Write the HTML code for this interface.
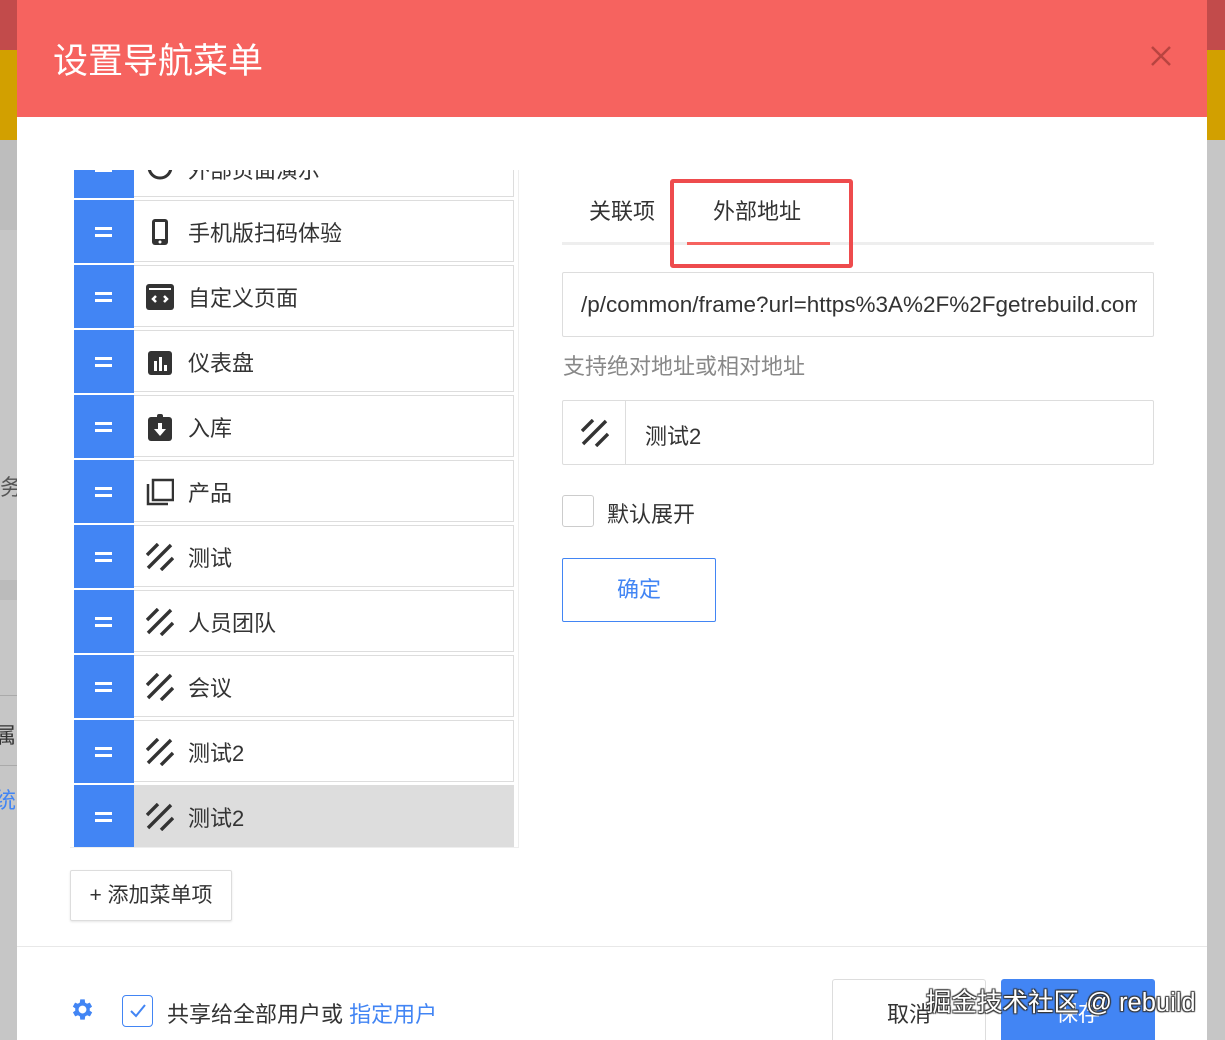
<!DOCTYPE html>
<html><head><meta charset="utf-8"><style>
*{box-sizing:border-box;margin:0;padding:0}
html,body{width:1225px;height:1040px;overflow:hidden}
body{background:#c6c6c6;font-family:"Liberation Sans","Noto Sans CJK SC",sans-serif;color:#333;position:relative}
.abs{position:absolute}
.modal{left:17px;top:0;width:1190px;height:1040px;background:#fff}
.hdr{left:17px;top:0;width:1190px;height:117px;background:#f6635f}
.title{left:53px;top:33px;font-size:35px;color:#fff}
.list{left:70px;top:170px;width:449px;height:678px;overflow:hidden;border-right:1px solid #eee;border-bottom:1px solid #eee}
.row{position:absolute;left:4px;width:440px;height:62px;border:1px solid #ddd;border-left:none;background:#fff}
.row .h{position:absolute;left:0;top:-1px;width:60px;height:63px;background:#4285f4}
.row .h:before,.row .h:after{content:"";position:absolute;left:21px;width:17px;height:3px;background:#fff}
.row .h:before{top:27px}.row .h:after{top:34px}
.row .ic{position:absolute;left:72px;top:17px;width:28px;height:28px}
.row .t{position:absolute;left:114px;top:15px;font-size:22px;color:#333}
.tab{font-size:22px;top:194px}
</style></head><body>
<div class="abs" style="left:0;top:0;width:17px;height:50px;background:#c24b4b"></div>
<div class="abs" style="left:0;top:50px;width:17px;height:90px;background:#d2a000"></div>
<div class="abs" style="left:0;top:140px;width:17px;height:90px;background:#bdbdbd"></div>
<div class="abs" style="left:0;top:580px;width:17px;height:20px;background:#bbb"></div>
<div class="abs" style="left:0;top:695px;width:17px;height:1px;background:#aaa"></div>
<div class="abs" style="left:0;top:765px;width:17px;height:1px;background:#aaa"></div>
<div class="abs" style="left:1207px;top:0;width:18px;height:50px;background:#c24b4b"></div>
<div class="abs" style="left:1207px;top:50px;width:18px;height:90px;background:#d2a000"></div>
<div class="abs" style="left:0;top:470px;font-size:22px;color:#555">务</div>
<div class="abs" style="left:-6px;top:718px;font-size:22px;color:#333">属</div>
<div class="abs" style="left:-6px;top:783px;font-size:22px;color:#4285f4">统</div>

<div class="abs modal"></div>
<div class="abs hdr"></div>
<div class="abs title">设置导航菜单</div>
<svg class="abs" style="left:1150px;top:45px" width="22" height="22"><path d="M2 2L20 20M20 2L2 20" stroke="#b84440" stroke-width="2.5"/></svg>

<div class="abs list">
 <div class="row" style="top:-35px"><div class="h"></div><div class="t" style="top:17px">外部页面演示</div>
  <svg class="ic" viewBox="0 0 28 28"><circle cx="14" cy="14" r="11" fill="none" stroke="#333" stroke-width="3"/></svg></div>
 <div class="row" style="top:30px"><div class="h"></div>
  <svg class="ic" viewBox="0 0 28 28"><rect x="6" y="1" width="16" height="26" rx="3" fill="#333"/><rect x="9" y="4" width="10" height="17" fill="#fff"/><circle cx="14" cy="24" r="1.5" fill="#fff"/></svg><div class="t">手机版扫码体验</div></div>
 <div class="row" style="top:95px"><div class="h"></div>
  <svg class="ic" viewBox="0 0 28 28"><rect x="0" y="1" width="28" height="26" rx="3" fill="#333"/><rect x="3" y="5" width="22" height="2" fill="#fff"/><path d="M10 13l-3 3 3 3M18 13l3 3-3 3" stroke="#fff" stroke-width="2.5" fill="none"/></svg><div class="t">自定义页面</div></div>
 <div class="row" style="top:160px"><div class="h"></div>
  <svg class="ic" viewBox="0 0 28 28"><rect x="2" y="3" width="24" height="24" rx="3" fill="#333"/><rect x="8" y="13" width="3" height="10" fill="#fff"/><rect x="13" y="9" width="3" height="14" fill="#fff"/><rect x="18" y="17" width="3" height="6" fill="#fff"/></svg><div class="t">仪表盘</div></div>
 <div class="row" style="top:225px"><div class="h"></div>
  <svg class="ic" viewBox="0 0 28 28"><rect x="2" y="4" width="24" height="24" rx="3" fill="#333"/><rect x="11" y="1" width="6" height="5" rx="2" fill="#333"/><path d="M12 10h4v6h4l-6 7-6-7h4z" fill="#fff"/></svg><div class="t">入库</div></div>
 <div class="row" style="top:290px"><div class="h"></div>
  <svg class="ic" viewBox="0 0 28 28"><path d="M2 6v20h20" stroke="#333" stroke-width="2.5" fill="none"/><rect x="7" y="2" width="20" height="20" stroke="#333" stroke-width="2.5" fill="none"/></svg><div class="t">产品</div></div>
 <div class="row" style="top:355px"><div class="h"></div><svg class="ic" viewBox="0 0 28 28"><path d="M1 12L12 1M2 25L25 2M15 27L27 15" stroke="#333" stroke-width="3.4"/></svg><div class="t">测试</div></div>
 <div class="row" style="top:420px"><div class="h"></div><svg class="ic" viewBox="0 0 28 28"><path d="M1 12L12 1M2 25L25 2M15 27L27 15" stroke="#333" stroke-width="3.4"/></svg><div class="t">人员团队</div></div>
 <div class="row" style="top:485px"><div class="h"></div><svg class="ic" viewBox="0 0 28 28"><path d="M1 12L12 1M2 25L25 2M15 27L27 15" stroke="#333" stroke-width="3.4"/></svg><div class="t">会议</div></div>
 <div class="row" style="top:550px"><div class="h"></div><svg class="ic" viewBox="0 0 28 28"><path d="M1 12L12 1M2 25L25 2M15 27L27 15" stroke="#333" stroke-width="3.4"/></svg><div class="t">测试2</div></div>
 <div class="row" style="top:615px;background:#ddd;border-color:#ddd"><div class="h"></div><svg class="ic" viewBox="0 0 28 28"><path d="M1 12L12 1M2 25L25 2M15 27L27 15" stroke="#333" stroke-width="3.4"/></svg><div class="t">测试2</div></div>
</div>

<div class="abs" style="left:70px;top:870px;width:162px;height:51px;border:1px solid #ddd;border-radius:2px;box-shadow:0 1px 2px rgba(0,0,0,.1);font-size:21px;line-height:49px;text-align:center">+ 添加菜单项</div>

<div class="abs tab" style="left:589px">关联项</div>
<div class="abs tab" style="left:713px">外部地址</div>
<div class="abs" style="left:562px;top:242px;width:592px;height:3px;background:#eee"></div>
<div class="abs" style="left:687px;top:242px;width:143px;height:3px;background:#f6635f"></div>
<div class="abs" style="left:670px;top:179px;width:183px;height:89px;border:4px solid #ee4b4d;border-radius:3px"></div>

<div class="abs" style="left:562px;top:272px;width:592px;height:65px;border:1px solid #ddd;border-radius:2px;overflow:hidden;white-space:nowrap;padding:0 16px 0 18px;font-size:22.5px;line-height:63px;color:#333"><div style="width:556px;overflow:hidden">/p/common/frame?url=https%3A%2F%2Fgetrebuild.com</div></div>
<div class="abs" style="left:563px;top:349px;font-size:22px;color:#888">支持绝对地址或相对地址</div>

<div class="abs" style="left:562px;top:400px;width:592px;height:65px;border:1px solid #ddd;border-radius:2px"></div>
<div class="abs" style="left:625px;top:401px;width:1px;height:63px;background:#ddd"></div>
<svg class="abs" style="left:581px;top:419px" width="28" height="28" viewBox="0 0 28 28"><path d="M1 12L12 1M2 25L25 2M15 27L27 15" stroke="#333" stroke-width="3.4"/></svg>
<div class="abs" style="left:645px;top:419px;font-size:22px">测试2</div>

<div class="abs" style="left:562px;top:495px;width:32px;height:32px;border:1px solid #ccc;border-radius:3px"></div>
<div class="abs" style="left:607px;top:497px;font-size:22px">默认展开</div>
<div class="abs" style="left:562px;top:558px;width:154px;height:64px;border:1px solid #4285f4;border-radius:2px;color:#4285f4;font-size:22px;line-height:62px;text-align:center">确定</div>

<div class="abs" style="left:17px;top:946px;width:1190px;height:1px;background:#e8e8e8"></div>
<svg class="abs" style="left:69px;top:996px" width="27" height="27" viewBox="0 0 24 24"><path fill="#4285f4" d="M19.4 13a7.5 7.5 0 000-2l2.1-1.6-2-3.5-2.5 1a7 7 0 00-1.7-1L15 3h-4l-.4 2.9a7 7 0 00-1.7 1l-2.5-1-2 3.5L6.6 11a7.5 7.5 0 000 2l-2.1 1.6 2 3.5 2.5-1a7 7 0 001.7 1L11 21h4l.4-2.9a7 7 0 001.7-1l2.5 1 2-3.5zM13 15.5a3.5 3.5 0 110-7 3.5 3.5 0 010 7z" transform="translate(-1 0)"/></svg>
<div class="abs" style="left:122px;top:995px;width:31px;height:32px;border:1px solid #4285f4;border-radius:4px"></div>
<svg class="abs" style="left:129px;top:1003px" width="18" height="16"><path d="M2 8l5 5 9-11" stroke="#4285f4" stroke-width="2" fill="none"/></svg>
<div class="abs" style="left:167px;top:997px;font-size:22px">共享给全部用户或 <span style="color:#4285f4">指定用户</span></div>

<div class="abs" style="left:832px;top:979px;width:154px;height:61px;border:1px solid #ddd;border-bottom:none;border-radius:3px 3px 0 0;font-size:22px;text-align:center;padding-top:17px">取消</div>
<div class="abs" style="left:1001px;top:979px;width:154px;height:61px;background:#4285f4;border-radius:3px 3px 0 0;font-size:22px;text-align:center;padding-top:17px;color:#fff">保存</div>
<div class="abs" style="left:926px;top:982px;font-size:25.5px;color:#fff;text-shadow:1px 1px 1px #333,-1px -1px 1px #333,1px -1px 1px #333,-1px 1px 1px #333;white-space:nowrap">掘金技术社区 @ rebuild</div>
</body></html>
